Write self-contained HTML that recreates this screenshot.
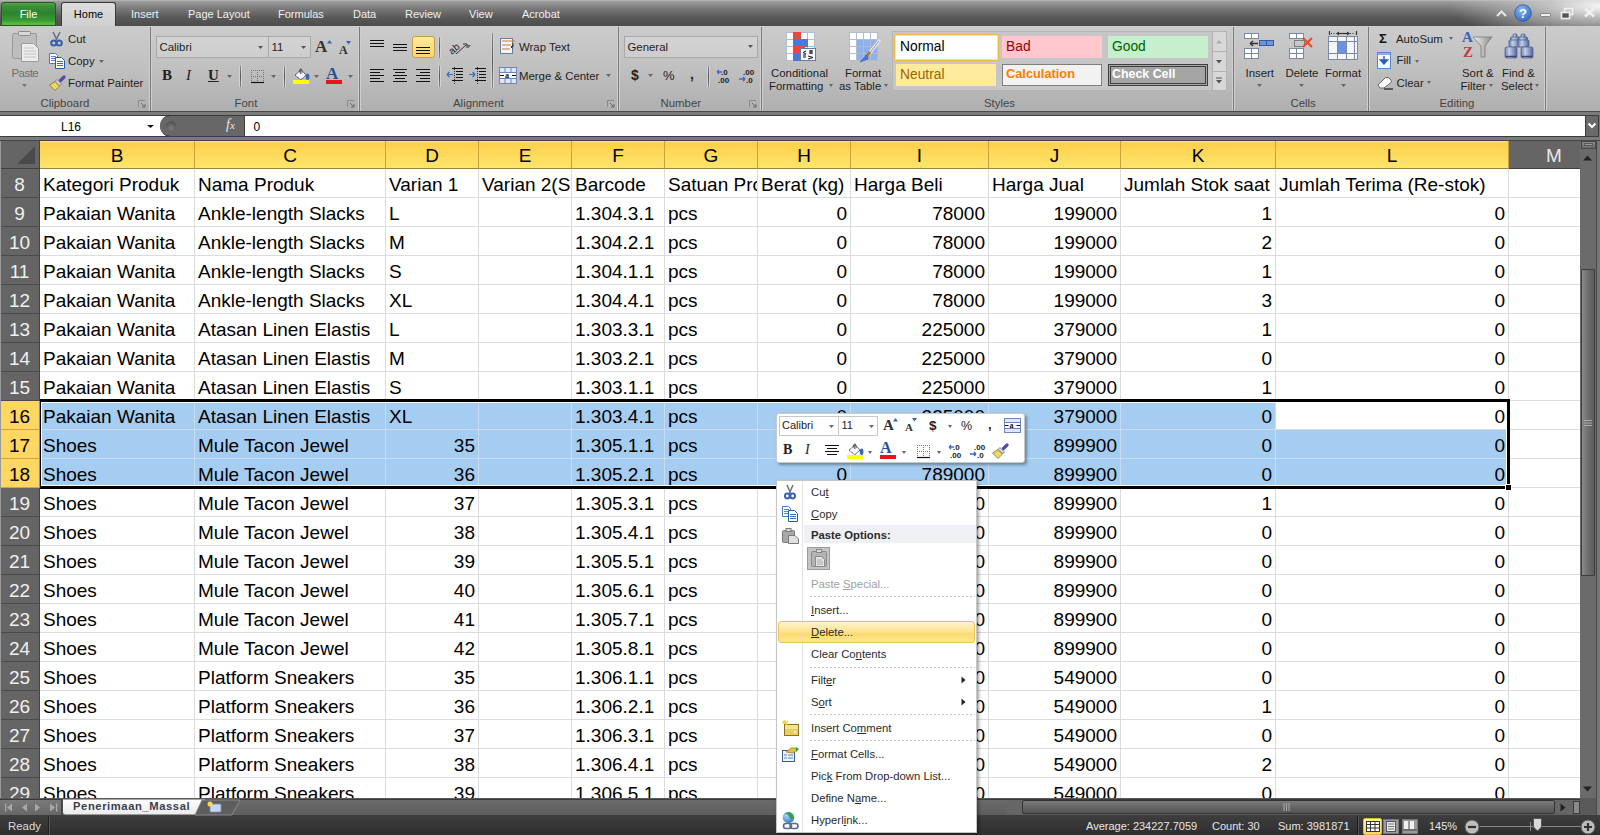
<!DOCTYPE html>
<html><head><meta charset="utf-8">
<style>
*{box-sizing:border-box;margin:0;padding:0}
html,body{width:1600px;height:835px;overflow:hidden;background:#fff;font-family:"Liberation Sans",sans-serif}
.a{position:absolute}
/* tab bar */
#tabbar{position:absolute;left:0;top:0;width:1600px;height:26px;background:linear-gradient(#bcbcbc 0px,#9c9c9c 1.5px,#7c7c7c 8px,#5a5a5a 17px,#4e4e4e 25px)}
#tabglow{position:absolute;left:1300px;top:0;width:300px;height:26px;background:radial-gradient(ellipse 150px 36px at 300px 6px,rgba(245,245,245,1),rgba(210,210,210,.75) 35%,rgba(120,120,120,0) 100%)}
.tab{position:absolute;top:8px;font-size:11px;color:#f0f0f0;white-space:nowrap}
#filetab{position:absolute;left:1px;top:2px;width:55px;height:24px;border-radius:3px 3px 0 0;background:linear-gradient(#5aa84a 0,#3e943a 12%,#2c822e 45%,#3a9c36 80%,#5cb83c 94%);border:1px solid #1e5e1e;color:#fff;font-size:11px;text-align:center;line-height:22px}
#hometab{position:absolute;left:61px;top:2px;width:55px;height:25px;border-radius:3px 3px 0 0;background:linear-gradient(#dcdcdc,#cfcfcf);border:1px solid #3a3a3a;border-bottom:none;color:#000;font-size:11px;text-align:center;line-height:23px}
/* ribbon */
#ribbon{position:absolute;left:0;top:26px;width:1600px;height:85px;background:linear-gradient(#cccccc,#c0c0c0 50%,#afafaf)}
.gsep{position:absolute;top:28px;width:2px;height:83px;border-left:1px solid #a8a8a8;border-right:1px solid #e4e4e4}
.glabel{position:absolute;top:96px;font-size:11.4px;color:#3c3c3c;text-align:center;white-space:nowrap}
.rt{position:absolute;font-size:11.4px;color:#1e1e1e;white-space:nowrap}
/* formula bar */
#fbar{position:absolute;left:0;top:111px;width:1600px;height:30px;background:#7b7b7b;border-top:1px solid #4a4a4a;border-bottom:1px solid #464646}
#namebox{position:absolute;left:0;top:115px;width:170px;height:22px;background:#fff;border-top:1px solid #3c3c3c;border-bottom:1px solid #3c3c3c}
#fxpill{position:absolute;left:160px;top:115px;width:84px;height:22px;background:#676767;border-radius:11px 0 0 11px;border-top:1px solid #3c3c3c;border-bottom:1px solid #3c3c3c}
#formula{position:absolute;left:244px;top:115px;width:1341px;height:22px;background:#fff;border-top:1px solid #3c3c3c;border-bottom:1px solid #3c3c3c;border-left:1px solid #3c3c3c}
/* grid */
#gridbg{position:absolute;left:0;top:141px;width:1600px;height:658px;background:#fff}
.c{position:absolute;height:29px;border-right:1px solid #dadcdd;border-bottom:1px solid #dadcdd;overflow:hidden;white-space:nowrap;font-size:19px;color:#000;line-height:28px}
.c span{position:absolute;top:2px}
.c.l span{left:3px}
.c.r span{right:3px}
.rh{position:absolute;left:0;width:40px;height:29px;background:#656565;border-bottom:1px solid #4a4a4a;border-right:1px solid #444;color:#f0f0f0;font-size:19px;text-align:center;line-height:28px;padding-top:2px}
.rh.sel{background:#fdd762;color:#000;border-bottom:1px solid #cfa646;border-right:1px solid #b98a2a}
.ch{position:absolute;top:141px;height:28px;background:#656565;border-right:1px solid #4a4a4a;border-bottom:1px solid #404040;color:#e8e8e8;font-size:19px;text-align:center;line-height:27px;padding-top:1px}
.ch.sel{background:linear-gradient(#fde08a 0,#fdd04c 2px,#fdd95a 45%,#fee56c 100%);color:#000;border-right:1px solid #c9a33a;border-bottom:1px solid #9f8040}
#corner{position:absolute;left:0;top:141px;width:40px;height:28px;background:#656565;border-right:1px solid #444;border-bottom:1px solid #404040}
/* selection */
#selbox{position:absolute;left:40px;top:399px;width:1470px;height:90px;border-style:solid;border-color:#000;border-width:3px 3px 3px 1px;box-shadow:inset 1px 1px 0 #fff,inset -1px -1px 0 #fff}
#fillh{position:absolute;left:1505px;top:484px;width:7px;height:7px;background:#fff;border:1px solid #fff}
#fillh div{width:5px;height:5px;background:#000}
#active{position:absolute}
/* scrollbars */
#vscroll{position:absolute;left:1580px;top:141px;width:20px;height:658px;background:#6b6b6b}
#tabrow{position:absolute;left:0;top:798px;width:1600px;height:17px;background:#5a5a5a}
#status{position:absolute;left:0;top:815px;width:1600px;height:20px;background:linear-gradient(#3e3e3e,#2e2e2e);color:#e0e0e0;font-size:11.4px}
/* context menu */
#menu{position:absolute;left:776px;top:480px;width:201px;height:353px;background:#fff;border:1px solid #c5c5c5;box-shadow:2px 2px 3px rgba(0,0,0,.35)}
.mi{position:absolute;left:34px;font-size:11.3px;color:#2a2a2a;white-space:nowrap}
#mini{position:absolute;left:776px;top:413px;width:249px;height:50px;background:#fff;border:1px solid #c9c9c9;border-radius:3px;box-shadow:2px 2px 3px rgba(0,0,0,.35)}
</style></head><body>
<div id="tabbar"></div>
<div id="tabglow"></div>
<div id="filetab">File</div>
<div id="hometab">Home</div>
<div class="tab" style="left:131px">Insert</div>
<div class="tab" style="left:188px">Page Layout</div>
<div class="tab" style="left:278px">Formulas</div>
<div class="tab" style="left:353px">Data</div>
<div class="tab" style="left:405px">Review</div>
<div class="tab" style="left:469px">View</div>
<div class="tab" style="left:522px">Acrobat</div>
<div id="ribbon"></div>
<div class="a" style="left:149px;top:27px;width:3px;height:84px;border-left:1px solid #cfcfcf;background:#7a7a7a;border-right:1px solid #cfcfcf"></div>
<div class="a" style="left:358px;top:27px;width:3px;height:84px;border-left:1px solid #cfcfcf;background:#7a7a7a;border-right:1px solid #cfcfcf"></div>
<div class="a" style="left:617px;top:27px;width:3px;height:84px;border-left:1px solid #cfcfcf;background:#7a7a7a;border-right:1px solid #cfcfcf"></div>
<div class="a" style="left:760px;top:27px;width:3px;height:84px;border-left:1px solid #cfcfcf;background:#7a7a7a;border-right:1px solid #cfcfcf"></div>
<div class="a" style="left:1232px;top:27px;width:3px;height:84px;border-left:1px solid #cfcfcf;background:#7a7a7a;border-right:1px solid #cfcfcf"></div>
<div class="a" style="left:1367px;top:27px;width:3px;height:84px;border-left:1px solid #cfcfcf;background:#7a7a7a;border-right:1px solid #cfcfcf"></div>
<div class="a" style="left:1544px;top:27px;width:3px;height:84px;border-left:1px solid #cfcfcf;background:#7a7a7a;border-right:1px solid #cfcfcf"></div>
<div class="rt" style="left:40.5px;top:97.1px;color:#444;font-size:11.4px;line-height:13.0px;">Clipboard</div>
<svg class="a" style="left:138px;top:100px" width="8" height="8" viewBox="0 0 8 8"><path d="M0.5 7V0.5H7" stroke="#8a8a8a" fill="none"/><path d="M3 3L7 7M7 4V7H4" stroke="#6a6a6a" fill="none"/></svg>
<div class="rt" style="left:234.5px;top:97.1px;color:#444;font-size:11.4px;line-height:13.0px;">Font</div>
<svg class="a" style="left:347px;top:100px" width="8" height="8" viewBox="0 0 8 8"><path d="M0.5 7V0.5H7" stroke="#8a8a8a" fill="none"/><path d="M3 3L7 7M7 4V7H4" stroke="#6a6a6a" fill="none"/></svg>
<div class="rt" style="left:453px;top:97.1px;color:#444;font-size:11.4px;line-height:13.0px;">Alignment</div>
<svg class="a" style="left:607px;top:100px" width="8" height="8" viewBox="0 0 8 8"><path d="M0.5 7V0.5H7" stroke="#8a8a8a" fill="none"/><path d="M3 3L7 7M7 4V7H4" stroke="#6a6a6a" fill="none"/></svg>
<div class="rt" style="left:660.5px;top:97.1px;color:#444;font-size:11.4px;line-height:13.0px;">Number</div>
<svg class="a" style="left:749px;top:100px" width="8" height="8" viewBox="0 0 8 8"><path d="M0.5 7V0.5H7" stroke="#8a8a8a" fill="none"/><path d="M3 3L7 7M7 4V7H4" stroke="#6a6a6a" fill="none"/></svg>
<div class="rt" style="left:984px;top:97.1px;color:#444;font-size:11.4px;line-height:13.0px;">Styles</div>
<div class="rt" style="left:1290.5px;top:97.1px;color:#444;font-size:11.4px;line-height:13.0px;">Cells</div>
<div class="rt" style="left:1439.5px;top:97.1px;color:#444;font-size:11.4px;line-height:13.0px;">Editing</div>
<svg class="a" style="left:11px;top:30px" width="30" height="32" viewBox="0 0 30 32"><rect x="1.5" y="3.5" width="24" height="25" rx="1.5" fill="#bdbdbd" stroke="#9a9a9a"/><rect x="7.5" y="1.5" width="12" height="4" rx="1" fill="#d8d8d8" stroke="#8a8a8a"/><path d="M10.5 13.5H22.5L27.5 18.5V31.5H10.5Z" fill="#ececec" stroke="#9c9c9c"/><path d="M13 18H23M13 21H25M13 24H25M13 27H25" stroke="#c4c4c4"/></svg>
<div class="rt" style="left:11.5px;top:66.6px;color:#6e6e6e;font-size:11.4px;line-height:13.0px;letter-spacing:-0.5px">Paste</div>
<svg class="a" style="left:22px;top:84px" width="5" height="3"><path d="M0 0H5L2.5 3Z" fill="#777"/></svg>
<svg class="a" style="left:50px;top:31px" width="13" height="16" viewBox="0 0 13 16"><path d="M3 1L7 9M10 1L6 9" stroke="#6f6f7f" stroke-width="1.6" fill="none"/><circle cx="3.8" cy="12" r="2.6" fill="none" stroke="#3a5db0" stroke-width="2"/><circle cx="9.2" cy="12" r="2.6" fill="none" stroke="#3a5db0" stroke-width="2"/></svg>
<div class="rt" style="left:68px;top:32.6px;color:#1e1e1e;font-size:11.4px;line-height:13.0px;">Cut</div>
<svg class="a" style="left:49px;top:53px" width="16" height="16" viewBox="0 0 16 16"><path d="M0.5 0.5H6.5L8.5 2.5V10.5H0.5Z" fill="#fff" stroke="#4a78c0"/><path d="M2 3.5H7M2 5.5H7M2 7.5H6" stroke="#5a8ad0"/><path d="M6.5 4.5H12.5L15.5 7.5V15.5H6.5Z" fill="#fff" stroke="#2d5aa6"/><path d="M8 8.5H14M8 10.5H14M8 12.5H14" stroke="#3d6ac0"/></svg>
<div class="rt" style="left:68px;top:55.1px;color:#1e1e1e;font-size:11.4px;line-height:13.0px;">Copy</div>
<svg class="a" style="left:99px;top:60px" width="5" height="3"><path d="M0 0H5L2.5 3Z" fill="#666"/></svg>
<svg class="a" style="left:49px;top:75px" width="17" height="16" viewBox="0 0 17 16"><path d="M11.5 5.5L15 2" stroke="#5a4aa8" stroke-width="3.2" stroke-linecap="round"/><path d="M8 4.5L12.5 9L10.5 11L6 6.5Z" fill="#d8d8e0" stroke="#6a6a7a" stroke-width=".8"/><path d="M6 6.5L10.5 11L6 15.5L0.5 10Z" fill="#e6cf5a" stroke="#8a7424" stroke-width=".8"/><path d="M3 10L7 14M5 8.5L9 12.5" stroke="#f6e9a0" stroke-width=".8"/></svg>
<div class="rt" style="left:68px;top:76.6px;color:#1e1e1e;font-size:11.4px;line-height:13.0px;">Format Painter</div>
<div class="a" style="left:156px;top:36px;width:113px;height:22px;border:1px solid #a8a8a8;background:linear-gradient(#d4d4d4,#cdcdcd)"></div>
<div class="a" style="left:268px;top:36px;width:43px;height:22px;border:1px solid #a8a8a8;background:linear-gradient(#d4d4d4,#cdcdcd)"></div>
<div class="rt" style="left:159.5px;top:40.6px;color:#1e1e1e;font-size:11.4px;line-height:13.0px;">Calibri</div>
<svg class="a" style="left:258px;top:46px" width="5" height="3"><path d="M0 0H5L2.5 3Z" fill="#555"/></svg>
<div class="rt" style="left:271.5px;top:40.6px;color:#1e1e1e;font-size:11.4px;line-height:13.0px;">11</div>
<svg class="a" style="left:301px;top:46px" width="5" height="3"><path d="M0 0H5L2.5 3Z" fill="#555"/></svg>
<div class="rt" style="left:315px;top:37px;font-family:'Liberation Serif';font-size:17px;font-weight:bold;color:#333">A</div>
<svg class="a" style="left:327px;top:40px" width="6" height="4" viewBox="0 0 6 4"><path d="M0 3.5H5L2.5 0Z" fill="#3a64b0"/></svg>
<div class="rt" style="left:339px;top:43px;font-family:'Liberation Serif';font-size:12px;font-weight:bold;color:#333">A</div>
<svg class="a" style="left:346px;top:41px" width="6" height="4" viewBox="0 0 6 4"><path d="M0 0H5L2.5 3.5Z" fill="#3a64b0"/></svg>
<div class="rt" style="left:162px;top:67px;font-family:'Liberation Serif';font-size:15px;font-weight:bold;color:#222">B</div>
<div class="rt" style="left:186px;top:67px;font-family:'Liberation Serif';font-size:15px;font-style:italic;color:#222">I</div>
<div class="rt" style="left:208px;top:67px;font-family:'Liberation Serif';font-size:15px;font-weight:bold;color:#222;text-decoration:underline">U</div>
<svg class="a" style="left:227px;top:75px" width="5" height="3"><path d="M0 0H5L2.5 3Z" fill="#666"/></svg>
<div class="a" style="left:239px;top:66px;width:3px;height:21px;border-left:1px solid #d2d2d2;background:linear-gradient(#8a8a8a,#555 50%,#8a8a8a);border-right:1px solid #d2d2d2"></div>
<svg class="a" style="left:250px;top:69px" width="15" height="15" viewBox="0 0 15 15"><path d="M1 1.5H14M1 7.5H14M1.5 1V14M7.5 1V14M13.5 1V14" stroke="#777" stroke-dasharray="1 1" fill="none"/><path d="M1 13.5H14" stroke="#111" stroke-width="1.2"/></svg>
<svg class="a" style="left:271px;top:75px" width="5" height="3"><path d="M0 0H5L2.5 3Z" fill="#666"/></svg>
<div class="a" style="left:283px;top:66px;width:3px;height:21px;border-left:1px solid #d2d2d2;background:linear-gradient(#8a8a8a,#555 50%,#8a8a8a);border-right:1px solid #d2d2d2"></div>
<svg class="a" style="left:292px;top:67px" width="19" height="18" viewBox="0 0 19 18"><path d="M3 8.3L8.8 2.7L14.3 8L8.8 12.8Z" fill="#f4f6fb" stroke="#2a3040" stroke-width="1" stroke-dasharray="1.2 .6"/><path d="M7 5.5Q8.8 -1.5 10.6 5.5" stroke="#555" stroke-width="1.1" fill="none"/><path d="M8.8 3V7" stroke="#555" stroke-width="1.2"/><ellipse cx="15.6" cy="9.8" rx="1.8" ry="3.2" fill="#3a64b8"/><rect x="1" y="13" width="16" height="4" fill="#ffff00"/></svg>
<svg class="a" style="left:314px;top:75px" width="5" height="3"><path d="M0 0H5L2.5 3Z" fill="#666"/></svg>
<div class="rt" style="left:326px;top:64px;font-family:'Liberation Serif';font-size:17px;font-weight:bold;color:#2a4f9a">A</div>
<div class="a" style="left:326px;top:80px;width:16px;height:4px;background:#e8141c"></div>
<svg class="a" style="left:348px;top:75px" width="5" height="3"><path d="M0 0H5L2.5 3Z" fill="#666"/></svg>
<svg class="a" style="left:370px;top:40px" width="16" height="10" viewBox="0 0 16 10"><path d="M0 0.5H14" stroke="#111" stroke-width="1"/><path d="M0 3.5H14" stroke="#111" stroke-width="1"/><path d="M0 6.5H14" stroke="#111" stroke-width="1"/></svg>
<svg class="a" style="left:393px;top:44px" width="16" height="10" viewBox="0 0 16 10"><path d="M0 0.5H14" stroke="#111" stroke-width="1"/><path d="M0 3.5H14" stroke="#111" stroke-width="1"/><path d="M0 6.5H14" stroke="#111" stroke-width="1"/></svg>
<div class="a" style="left:412px;top:36px;width:23px;height:22px;border:1px solid #c4a24a;border-radius:3px;background:linear-gradient(#fde9a0,#fbd86a)"></div>
<svg class="a" style="left:416px;top:47px" width="16" height="10" viewBox="0 0 16 10"><path d="M0 0.5H14" stroke="#111" stroke-width="1"/><path d="M0 3.5H14" stroke="#111" stroke-width="1"/><path d="M0 6.5H14" stroke="#111" stroke-width="1"/></svg>
<div class="a" style="left:438px;top:37px;width:3px;height:21px;border-left:1px solid #d2d2d2;background:linear-gradient(#8a8a8a,#555 50%,#8a8a8a);border-right:1px solid #d2d2d2"></div>
<svg class="a" style="left:447px;top:39px" width="26" height="17" viewBox="0 0 26 17"><text x="1" y="13" font-family="Liberation Sans" font-size="10" transform="rotate(-40 7 9)" fill="#222">ab</text><path d="M9 15L19 6M16 5H20V9" stroke="#333" fill="none"/></svg>
<svg class="a" style="left:466px;top:45px" width="5" height="3"><path d="M0 0H5L2.5 3Z" fill="#666"/></svg>
<svg class="a" style="left:370px;top:69px" width="16" height="16" viewBox="0 0 16 16"><path d="M0 0.5H14" stroke="#111" stroke-width="1"/><path d="M0 3.5H10" stroke="#111" stroke-width="1"/><path d="M0 6.5H14" stroke="#111" stroke-width="1"/><path d="M0 9.5H10" stroke="#111" stroke-width="1"/><path d="M0 12.5H14" stroke="#111" stroke-width="1"/></svg>
<svg class="a" style="left:393px;top:69px" width="16" height="16" viewBox="0 0 16 16"><path d="M0 0.5H14" stroke="#111" stroke-width="1"/><path d="M2 3.5H12" stroke="#111" stroke-width="1"/><path d="M0 6.5H14" stroke="#111" stroke-width="1"/><path d="M2 9.5H12" stroke="#111" stroke-width="1"/><path d="M0 12.5H14" stroke="#111" stroke-width="1"/></svg>
<svg class="a" style="left:416px;top:69px" width="16" height="16" viewBox="0 0 16 16"><path d="M0 0.5H14" stroke="#111" stroke-width="1"/><path d="M4 3.5H14" stroke="#111" stroke-width="1"/><path d="M0 6.5H14" stroke="#111" stroke-width="1"/><path d="M4 9.5H14" stroke="#111" stroke-width="1"/><path d="M0 12.5H14" stroke="#111" stroke-width="1"/></svg>
<div class="a" style="left:438px;top:66px;width:3px;height:21px;border-left:1px solid #d2d2d2;background:linear-gradient(#8a8a8a,#555 50%,#8a8a8a);border-right:1px solid #d2d2d2"></div>
<svg class="a" style="left:446px;top:67px" width="18" height="17" viewBox="0 0 18 17"><path d="M6 1.5H17M10 4.5H17M10 7.5H17M10 10.5H17M6 13.5H17" stroke="#111" stroke-width="1"/><path d="M1 7.5H7M1 7.5L3.5 5M1 7.5L3.5 10" stroke="#3a6ad0" stroke-width="1.2" fill="none"/><path d="M8.5 0V17" stroke="#333" stroke-dasharray="1 1"/></svg>
<svg class="a" style="left:469px;top:67px" width="18" height="17" viewBox="0 0 18 17"><path d="M6 1.5H17M10 4.5H17M10 7.5H17M10 10.5H17M6 13.5H17" stroke="#111" stroke-width="1"/><path d="M0 7.5H6M6 7.5L3.5 5M6 7.5L3.5 10" stroke="#3a6ad0" stroke-width="1.2" fill="none"/><path d="M8.5 0V17" stroke="#333" stroke-dasharray="1 1"/></svg>
<div class="a" style="left:491px;top:33px;width:3px;height:55px;border-left:1px solid #d2d2d2;background:linear-gradient(#8a8a8a,#555 50%,#8a8a8a);border-right:1px solid #d2d2d2"></div>
<svg class="a" style="left:499px;top:37px" width="18" height="18" viewBox="0 0 18 18"><rect x="1.5" y="1.5" width="12" height="15" fill="#f4f4f4" stroke="#6a7fa0"/><path d="M3 4H16M3 8H12M3 12H11" stroke="#c87a3a" stroke-width="1.2"/><path d="M14 6V10L12 10M12 10L13.5 8.5M12 10L13.5 11.5" stroke="#333" fill="none"/></svg>
<div class="rt" style="left:519px;top:40.6px;color:#1e1e1e;font-size:11.4px;line-height:13.0px;">Wrap Text</div>
<svg class="a" style="left:499px;top:67px" width="18" height="17" viewBox="0 0 18 17"><rect x="0.5" y="0.5" width="17" height="16" fill="#dfe8f6" stroke="#6a86b8"/><path d="M0 5.5H18M0 11.5H18M6 0V5M12 0V5M6 12V17M12 12V17" stroke="#6a86b8"/><rect x="1" y="6" width="16" height="5" fill="#fff"/><text x="6" y="11" font-family="Liberation Serif" font-size="8" font-weight="bold" fill="#111">a</text><path d="M1 8.5H5M13 8.5H17" stroke="#111"/></svg>
<div class="rt" style="left:519px;top:69.6px;color:#1e1e1e;font-size:11.4px;line-height:13.0px;">Merge &amp; Center</div>
<svg class="a" style="left:606px;top:74px" width="5" height="3"><path d="M0 0H5L2.5 3Z" fill="#666"/></svg>
<div class="a" style="left:624px;top:36px;width:134px;height:22px;border:1px solid #a8a8a8;background:linear-gradient(#d4d4d4,#cdcdcd)"></div>
<div class="rt" style="left:627.5px;top:41.1px;color:#1e1e1e;font-size:11.4px;line-height:13.0px;">General</div>
<svg class="a" style="left:748px;top:45px" width="5" height="3"><path d="M0 0H5L2.5 3Z" fill="#555"/></svg>
<div class="rt" style="left:631px;top:67px;font-size:14px;font-weight:bold;color:#222">$</div>
<svg class="a" style="left:648px;top:74px" width="5" height="3"><path d="M0 0H5L2.5 3Z" fill="#666"/></svg>
<div class="rt" style="left:663px;top:68px;font-size:13px;color:#222">%</div>
<div class="rt" style="left:690px;top:66px;font-size:14px;font-weight:bold;color:#222">,</div>
<div class="a" style="left:707px;top:66px;width:3px;height:21px;border-left:1px solid #d2d2d2;background:linear-gradient(#8a8a8a,#555 50%,#8a8a8a);border-right:1px solid #d2d2d2"></div>
<svg class="a" style="left:716px;top:68px" width="18" height="16" viewBox="0 0 18 16"><text x="5" y="7" font-family="Liberation Sans" font-size="8" font-weight="bold" fill="#222">.0</text><text x="2" y="15" font-family="Liberation Sans" font-size="8" font-weight="bold" fill="#222">.00</text><path d="M1 4H6M1 4L3 2M1 4L3 6" stroke="#3a6ad0" stroke-width="1.3" fill="none"/></svg>
<svg class="a" style="left:738px;top:68px" width="18" height="16" viewBox="0 0 18 16"><text x="5" y="7" font-family="Liberation Sans" font-size="8" font-weight="bold" fill="#222">.00</text><text x="8" y="15" font-family="Liberation Sans" font-size="8" font-weight="bold" fill="#222">.0</text><path d="M1 11H7M7 11L5 9M7 11L5 13" stroke="#3a6ad0" stroke-width="1.3" fill="none"/></svg>
<svg class="a" style="left:786px;top:32px" width="32" height="30" viewBox="0 0 32 30"><rect x="0.5" y="0.5" width="7" height="7" fill="#ffffff" stroke="#b4bccc" stroke-width="1"/><rect x="7.5" y="0.5" width="7" height="7" fill="#ffffff" stroke="#b4bccc" stroke-width="1"/><rect x="14.5" y="0.5" width="7" height="7" fill="#ffffff" stroke="#b4bccc" stroke-width="1"/><rect x="21.5" y="0.5" width="7" height="7" fill="#ffffff" stroke="#b4bccc" stroke-width="1"/><rect x="0.5" y="7.5" width="7" height="7" fill="#ffffff" stroke="#b4bccc" stroke-width="1"/><rect x="7.5" y="7.5" width="7" height="7" fill="#ffffff" stroke="#b4bccc" stroke-width="1"/><rect x="14.5" y="7.5" width="7" height="7" fill="#ffffff" stroke="#b4bccc" stroke-width="1"/><rect x="21.5" y="7.5" width="7" height="7" fill="#ffffff" stroke="#b4bccc" stroke-width="1"/><rect x="0.5" y="14.5" width="7" height="7" fill="#ffffff" stroke="#b4bccc" stroke-width="1"/><rect x="7.5" y="14.5" width="7" height="7" fill="#ffffff" stroke="#b4bccc" stroke-width="1"/><rect x="14.5" y="14.5" width="7" height="7" fill="#ffffff" stroke="#b4bccc" stroke-width="1"/><rect x="21.5" y="14.5" width="7" height="7" fill="#ffffff" stroke="#b4bccc" stroke-width="1"/><rect x="0.5" y="21.5" width="7" height="7" fill="#ffffff" stroke="#b4bccc" stroke-width="1"/><rect x="7.5" y="21.5" width="7" height="7" fill="#ffffff" stroke="#b4bccc" stroke-width="1"/><rect x="14.5" y="21.5" width="7" height="7" fill="#ffffff" stroke="#b4bccc" stroke-width="1"/><rect x="21.5" y="21.5" width="7" height="7" fill="#ffffff" stroke="#b4bccc" stroke-width="1"/><rect x="7" y="0" width="8" height="8" fill="#e84a3a"/><rect x="7" y="7" width="15" height="8" fill="#4a7ad8"/><rect x="7" y="14" width="12" height="8" fill="#e84a3a"/><rect x="7" y="21" width="8" height="8" fill="#4a7ad8"/><rect x="14.5" y="16.5" width="15" height="12" fill="#f4f8ff" stroke="#6a7a9a"/><path d="M20 19L17 20.5L20 22M17 23H20M17 25H20M23 19H27M23 21H27M25 18V22M22 24L27 25.5L22 27" stroke="#111" stroke-width="1" fill="none"/></svg>
<svg class="a" style="left:849px;top:32px" width="32" height="31" viewBox="0 0 32 31"><rect x="0.5" y="0.5" width="7" height="7" fill="#ffffff" stroke="#b4bccc" stroke-width="1"/><rect x="7.5" y="0.5" width="7" height="7" fill="#ffffff" stroke="#b4bccc" stroke-width="1"/><rect x="14.5" y="0.5" width="7" height="7" fill="#ffffff" stroke="#b4bccc" stroke-width="1"/><rect x="21.5" y="0.5" width="7" height="7" fill="#ffffff" stroke="#b4bccc" stroke-width="1"/><rect x="0.5" y="7.5" width="7" height="7" fill="#ffffff" stroke="#b4bccc" stroke-width="1"/><rect x="7.5" y="7.5" width="7" height="7" fill="#8eb0ec" stroke="#b4bccc" stroke-width="1"/><rect x="14.5" y="7.5" width="7" height="7" fill="#8eb0ec" stroke="#b4bccc" stroke-width="1"/><rect x="21.5" y="7.5" width="7" height="7" fill="#8eb0ec" stroke="#b4bccc" stroke-width="1"/><rect x="0.5" y="14.5" width="7" height="7" fill="#ffffff" stroke="#b4bccc" stroke-width="1"/><rect x="7.5" y="14.5" width="7" height="7" fill="#8eb0ec" stroke="#b4bccc" stroke-width="1"/><rect x="14.5" y="14.5" width="7" height="7" fill="#8eb0ec" stroke="#b4bccc" stroke-width="1"/><rect x="21.5" y="14.5" width="7" height="7" fill="#8eb0ec" stroke="#b4bccc" stroke-width="1"/><rect x="0.5" y="21.5" width="7" height="7" fill="#ffffff" stroke="#b4bccc" stroke-width="1"/><rect x="7.5" y="21.5" width="7" height="7" fill="#8eb0ec" stroke="#b4bccc" stroke-width="1"/><rect x="14.5" y="21.5" width="7" height="7" fill="#8eb0ec" stroke="#b4bccc" stroke-width="1"/><rect x="21.5" y="21.5" width="7" height="7" fill="#8eb0ec" stroke="#b4bccc" stroke-width="1"/><path d="M30 9L20 22" stroke="#e8e8e8" stroke-width="3.2" stroke-linecap="round"/><path d="M30 9L20 22" stroke="#9a9a9a" stroke-width="1" /><path d="M21 20L17 25" stroke="#a08040" stroke-width="3"/><path d="M17.5 23L11 30L19 27Z" fill="#4a78d0" stroke="#3a5aa0" stroke-width=".6"/></svg>
<div class="rt" style="left:771px;top:66.6px;color:#1e1e1e;font-size:11.4px;line-height:13.0px;">Conditional</div>
<div class="rt" style="left:769px;top:79.6px;color:#1e1e1e;font-size:11.4px;line-height:13.0px;">Formatting</div>
<svg class="a" style="left:829px;top:84px" width="4" height="3"><path d="M0 0H4L2.0 3Z" fill="#666"/></svg>
<div class="rt" style="left:845px;top:66.6px;color:#1e1e1e;font-size:11.4px;line-height:13.0px;">Format</div>
<div class="rt" style="left:839px;top:79.6px;color:#1e1e1e;font-size:11.4px;line-height:13.0px;">as Table</div>
<svg class="a" style="left:884px;top:84px" width="4" height="3"><path d="M0 0H4L2.0 3Z" fill="#666"/></svg>
<div class="a" style="left:892px;top:31px;width:335px;height:60px;border:1px solid #b4b4b4;background:#c6c6c6"></div>
<div class="a" style="left:894px;top:34px;width:105px;height:27px;border:1px solid #f0b840;border-radius:2px;background:#fff;box-shadow:inset 0 0 0 1px #ffe6a0"></div>
<div class="rt" style="left:900px;top:39.1px;color:#000;font-size:13.8px;line-height:15.7px;">Normal</div>
<div class="a" style="left:1002px;top:36px;width:100px;height:22px;background:#ffc7ce"></div>
<div class="rt" style="left:1006px;top:39.1px;color:#9c0006;font-size:13.8px;line-height:15.7px;">Bad</div>
<div class="a" style="left:1108px;top:36px;width:100px;height:22px;background:#c6efce"></div>
<div class="rt" style="left:1112px;top:39.1px;color:#006100;font-size:13.8px;line-height:15.7px;">Good</div>
<div class="a" style="left:896px;top:64px;width:100px;height:22px;background:#ffeb9c"></div>
<div class="rt" style="left:900px;top:66.6px;color:#9c6500;font-size:13.8px;line-height:15.7px;">Neutral</div>
<div class="a" style="left:1002px;top:64px;width:100px;height:22px;background:#f2f2f2;border:1px solid #7f7f7f"></div>
<div class="rt" style="left:1006px;top:66.8px;color:#fa7d00;font-size:12.8px;line-height:14.6px;font-weight:bold">Calculation</div>
<div class="a" style="left:1108px;top:64px;width:100px;height:22px;background:#a5a5a5;border:3px double #3f3f3f"></div>
<div class="rt" style="left:1112px;top:66.9px;color:#fff;font-size:12.4px;line-height:14.1px;font-weight:bold">Check Cell</div>
<div class="a" style="left:1212px;top:32px;width:14px;height:58px;background:#d8d8d8;border-left:1px solid #b0b0b0"></div>
<div class="a" style="left:1212px;top:51px;width:14px;height:1px;background:#b0b0b0"></div>
<div class="a" style="left:1212px;top:71px;width:14px;height:1px;background:#b0b0b0"></div>
<svg class="a" style="left:1216px;top:40px" width="7" height="4" viewBox="0 0 7 4"><path d="M0 3.5H6L3 0Z" fill="#aaa"/></svg>
<svg class="a" style="left:1216px;top:60px" width="7" height="4" viewBox="0 0 7 4"><path d="M0 0H6L3 3.5Z" fill="#555"/></svg>
<svg class="a" style="left:1216px;top:77px" width="7" height="8" viewBox="0 0 7 8"><path d="M0 1H6" stroke="#555"/><path d="M0 3H6L3 6.5Z" fill="#555"/></svg>
<svg class="a" style="left:1244px;top:33px" width="32" height="27" viewBox="0 0 32 27"><g transform="translate(0,0)"><rect x="0.5" y="0.5" width="7" height="5" fill="#fff" stroke="#7a88a4"/><rect x="7.5" y="0.5" width="7" height="5" fill="#fff" stroke="#7a88a4"/></g><g transform="translate(15,7)"><rect x="0.5" y="0.5" width="7" height="5" fill="#6a94e0" stroke="#3a5aa0"/><rect x="7.5" y="0.5" width="7" height="5" fill="#6a94e0" stroke="#3a5aa0"/></g><path d="M6 10.5H14M6 10.5L9 8M6 10.5L9 13" stroke="#333" stroke-width="1.3" fill="none"/><g transform="translate(0,15)"><rect x="0.5" y="0.5" width="7" height="5" fill="#fff" stroke="#7a88a4"/><rect x="0.5" y="5.5" width="7" height="5" fill="#fff" stroke="#7a88a4"/><rect x="7.5" y="0.5" width="7" height="5" fill="#fff" stroke="#7a88a4"/><rect x="7.5" y="5.5" width="7" height="5" fill="#fff" stroke="#7a88a4"/></g></svg>
<div class="rt" style="left:1245.5px;top:66.6px;color:#1e1e1e;font-size:11.4px;line-height:13.0px;">Insert</div>
<svg class="a" style="left:1257px;top:84px" width="5" height="3"><path d="M0 0H5L2.5 3Z" fill="#666"/></svg>
<svg class="a" style="left:1289px;top:33px" width="26" height="27" viewBox="0 0 26 27"><g><rect x="0.5" y="0.5" width="7" height="5" fill="#fff" stroke="#7a88a4"/><rect x="7.5" y="0.5" width="7" height="5" fill="#fff" stroke="#7a88a4"/></g><rect x="5.5" y="7.5" width="10" height="6" fill="none" stroke="#333" stroke-dasharray="1 1"/><g transform="translate(0,15)"><rect x="0.5" y="0.5" width="7" height="5" fill="#fff" stroke="#7a88a4"/><rect x="0.5" y="5.5" width="7" height="5" fill="#fff" stroke="#7a88a4"/><rect x="7.5" y="0.5" width="7" height="5" fill="#fff" stroke="#7a88a4"/><rect x="7.5" y="5.5" width="7" height="5" fill="#fff" stroke="#7a88a4"/></g><path d="M14 5L23 14M23 5L14 14" stroke="#e84a2a" stroke-width="2.2"/></svg>
<div class="rt" style="left:1285.5px;top:66.6px;color:#1e1e1e;font-size:11.4px;line-height:13.0px;">Delete</div>
<svg class="a" style="left:1299px;top:84px" width="5" height="3"><path d="M0 0H5L2.5 3Z" fill="#666"/></svg>
<svg class="a" style="left:1328px;top:31px" width="31" height="30" viewBox="0 0 31 30"><path d="M1.5 0V4M28.5 0V4" stroke="#333" stroke-width="1.2"/><path d="M3 2.5H8M22 2.5H27" stroke="#333" stroke-dasharray="1 1.5"/><path d="M9 2.5H21" stroke="#333" stroke-width="1.2"/><path d="M8 2.5L11 0.5V4.5ZM22 2.5L19 0.5V4.5Z" fill="#333"/><rect x="0.5" y="5.5" width="29" height="23" fill="#f4f6fb" stroke="#7a8aaa"/><path d="M0 10.5H30M0 22.5H30M9.5 5V29M18.5 5V29M26.5 5V29" stroke="#7a8aaa"/><rect x="10" y="11" width="8" height="11" fill="#6a94e0"/></svg>
<div class="rt" style="left:1325px;top:66.6px;color:#1e1e1e;font-size:11.4px;line-height:13.0px;">Format</div>
<svg class="a" style="left:1341px;top:84px" width="5" height="3"><path d="M0 0H5L2.5 3Z" fill="#666"/></svg>
<div class="rt" style="left:1379px;top:31px;font-size:13px;font-weight:bold;color:#111">&#931;</div>
<div class="rt" style="left:1396px;top:32.6px;color:#1e1e1e;font-size:11.4px;line-height:13.0px;">AutoSum</div>
<svg class="a" style="left:1449px;top:37px" width="4" height="3"><path d="M0 0H4L2.0 3Z" fill="#666"/></svg>
<svg class="a" style="left:1377px;top:52px" width="15" height="17" viewBox="0 0 15 17"><rect x="0.5" y="0.5" width="13" height="16" fill="#f4f8ff" stroke="#5a86c8"/><rect x="1" y="1" width="12" height="2" fill="#8ab0e8"/><path d="M7 4V11M3.5 8L7 12L10.5 8Z" fill="#3a74d8" stroke="#2a5ab8" stroke-width="1.4"/></svg>
<div class="rt" style="left:1396.5px;top:53.6px;color:#1e1e1e;font-size:11.4px;line-height:13.0px;">Fill</div>
<svg class="a" style="left:1415px;top:60px" width="4" height="3"><path d="M0 0H4L2.0 3Z" fill="#666"/></svg>
<svg class="a" style="left:1377px;top:76px" width="17" height="14" viewBox="0 0 17 14"><path d="M1 9L8 2Q10 0.5 12 2L14 4Q15 6 13.5 7L7 12H3Z" fill="#fafafa" stroke="#6a6a6a"/><path d="M7 13H16" stroke="#222" stroke-width="1.3"/></svg>
<div class="rt" style="left:1396.5px;top:76.6px;color:#1e1e1e;font-size:11.4px;line-height:13.0px;">Clear</div>
<svg class="a" style="left:1427px;top:81px" width="4" height="3"><path d="M0 0H4L2.0 3Z" fill="#666"/></svg>
<div class="rt" style="left:1462px;top:29px;font-family:'Liberation Serif';font-size:15px;font-weight:bold;color:#3a64b8">A</div>
<div class="rt" style="left:1463px;top:44px;font-family:'Liberation Serif';font-size:15px;font-weight:bold;color:#c03a3a">Z</div>
<svg class="a" style="left:1472px;top:36px" width="21" height="22" viewBox="0 0 21 22"><defs><linearGradient id="fg1" x1="0" x2="1"><stop offset="0" stop-color="#f4f4f4"/><stop offset="1" stop-color="#8a8a8a"/></linearGradient></defs><path d="M1 1H20L13 10V21H9V10Z" fill="url(#fg1)" stroke="#7a7a7a" stroke-width=".8"/></svg>
<div class="rt" style="left:1462px;top:67.1px;color:#1e1e1e;font-size:11.4px;line-height:13.0px;">Sort &amp;</div>
<div class="rt" style="left:1460.5px;top:79.6px;color:#1e1e1e;font-size:11.4px;line-height:13.0px;">Filter</div>
<svg class="a" style="left:1489px;top:84px" width="4" height="3"><path d="M0 0H4L2.0 3Z" fill="#666"/></svg>
<svg class="a" style="left:1504px;top:33px" width="30" height="26" viewBox="0 0 30 26"><defs><linearGradient id="bg1" x1="0" x2="1" y1="0" y2="0"><stop offset="0" stop-color="#6a7eb0"/><stop offset=".35" stop-color="#c4d0ea"/><stop offset="1" stop-color="#50669a"/></linearGradient></defs><g fill="url(#bg1)" stroke="#4a5a88" stroke-width=".7"><rect x="9" y="1" width="4" height="3.5" rx="1"/><rect x="17" y="1" width="4" height="3.5" rx="1"/><rect x="6.5" y="4" width="9" height="3.5" rx="1"/><rect x="14.5" y="4" width="9" height="3.5" rx="1"/><rect x="5" y="7" width="11" height="7" rx="1"/><rect x="14" y="7" width="11" height="7" rx="1"/><rect x="1" y="14" width="12" height="11" rx="1.5"/><rect x="17" y="14" width="12" height="11" rx="1.5"/></g><path d="M1.5 23.5H12.5M17.5 23.5H28.5" stroke="#34487a" stroke-width="1.5"/></svg>
<div class="rt" style="left:1502px;top:67.1px;color:#1e1e1e;font-size:11.4px;line-height:13.0px;">Find &amp;</div>
<div class="rt" style="left:1501px;top:79.6px;color:#1e1e1e;font-size:11.4px;line-height:13.0px;">Select</div>
<svg class="a" style="left:1535px;top:84px" width="4" height="3"><path d="M0 0H4L2.0 3Z" fill="#666"/></svg>
<div id="fbar"></div>
<div id="namebox"></div>
<div id="fxpill"></div>
<div id="formula"></div>
<div class="a" style="left:61px;top:120px;font-size:12px">L16</div>
<div class="a" style="left:253.5px;top:120px;font-size:12px">0</div>
<div id="gridbg"></div>
<div class="c l" style="left:40px;top:169px;width:155px;"><span>Kategori Produk</span></div>
<div class="c l" style="left:195px;top:169px;width:191px;"><span>Nama Produk</span></div>
<div class="c l" style="left:386px;top:169px;width:93px;"><span>Varian 1</span></div>
<div class="c l" style="left:479px;top:169px;width:93px;"><span>Varian 2(Size)</span></div>
<div class="c l" style="left:572px;top:169px;width:93px;"><span>Barcode</span></div>
<div class="c l" style="left:665px;top:169px;width:93px;"><span>Satuan Produk</span></div>
<div class="c l" style="left:758px;top:169px;width:93px;"><span>Berat (kg) (opsional)</span></div>
<div class="c l" style="left:851px;top:169px;width:138px;"><span>Harga Beli</span></div>
<div class="c l" style="left:989px;top:169px;width:132px;"><span>Harga Jual</span></div>
<div class="c l" style="left:1121px;top:169px;width:155px;"><span>Jumlah Stok saat ini</span></div>
<div class="c l" style="left:1276px;top:169px;width:233px;"><span>Jumlah Terima (Re-stok)</span></div>
<div class="c l" style="left:1509px;top:169px;width:72px;"><span></span></div>
<div class="c l" style="left:40px;top:198px;width:155px;"><span>Pakaian Wanita</span></div>
<div class="c l" style="left:195px;top:198px;width:191px;"><span>Ankle-length Slacks</span></div>
<div class="c l" style="left:386px;top:198px;width:93px;"><span>L</span></div>
<div class="c l" style="left:479px;top:198px;width:93px;"><span></span></div>
<div class="c l" style="left:572px;top:198px;width:93px;"><span>1.304.3.1</span></div>
<div class="c l" style="left:665px;top:198px;width:93px;"><span>pcs</span></div>
<div class="c r" style="left:758px;top:198px;width:93px;"><span>0</span></div>
<div class="c r" style="left:851px;top:198px;width:138px;"><span>78000</span></div>
<div class="c r" style="left:989px;top:198px;width:132px;"><span>199000</span></div>
<div class="c r" style="left:1121px;top:198px;width:155px;"><span>1</span></div>
<div class="c r" style="left:1276px;top:198px;width:233px;"><span>0</span></div>
<div class="c l" style="left:1509px;top:198px;width:72px;"><span></span></div>
<div class="c l" style="left:40px;top:227px;width:155px;"><span>Pakaian Wanita</span></div>
<div class="c l" style="left:195px;top:227px;width:191px;"><span>Ankle-length Slacks</span></div>
<div class="c l" style="left:386px;top:227px;width:93px;"><span>M</span></div>
<div class="c l" style="left:479px;top:227px;width:93px;"><span></span></div>
<div class="c l" style="left:572px;top:227px;width:93px;"><span>1.304.2.1</span></div>
<div class="c l" style="left:665px;top:227px;width:93px;"><span>pcs</span></div>
<div class="c r" style="left:758px;top:227px;width:93px;"><span>0</span></div>
<div class="c r" style="left:851px;top:227px;width:138px;"><span>78000</span></div>
<div class="c r" style="left:989px;top:227px;width:132px;"><span>199000</span></div>
<div class="c r" style="left:1121px;top:227px;width:155px;"><span>2</span></div>
<div class="c r" style="left:1276px;top:227px;width:233px;"><span>0</span></div>
<div class="c l" style="left:1509px;top:227px;width:72px;"><span></span></div>
<div class="c l" style="left:40px;top:256px;width:155px;"><span>Pakaian Wanita</span></div>
<div class="c l" style="left:195px;top:256px;width:191px;"><span>Ankle-length Slacks</span></div>
<div class="c l" style="left:386px;top:256px;width:93px;"><span>S</span></div>
<div class="c l" style="left:479px;top:256px;width:93px;"><span></span></div>
<div class="c l" style="left:572px;top:256px;width:93px;"><span>1.304.1.1</span></div>
<div class="c l" style="left:665px;top:256px;width:93px;"><span>pcs</span></div>
<div class="c r" style="left:758px;top:256px;width:93px;"><span>0</span></div>
<div class="c r" style="left:851px;top:256px;width:138px;"><span>78000</span></div>
<div class="c r" style="left:989px;top:256px;width:132px;"><span>199000</span></div>
<div class="c r" style="left:1121px;top:256px;width:155px;"><span>1</span></div>
<div class="c r" style="left:1276px;top:256px;width:233px;"><span>0</span></div>
<div class="c l" style="left:1509px;top:256px;width:72px;"><span></span></div>
<div class="c l" style="left:40px;top:285px;width:155px;"><span>Pakaian Wanita</span></div>
<div class="c l" style="left:195px;top:285px;width:191px;"><span>Ankle-length Slacks</span></div>
<div class="c l" style="left:386px;top:285px;width:93px;"><span>XL</span></div>
<div class="c l" style="left:479px;top:285px;width:93px;"><span></span></div>
<div class="c l" style="left:572px;top:285px;width:93px;"><span>1.304.4.1</span></div>
<div class="c l" style="left:665px;top:285px;width:93px;"><span>pcs</span></div>
<div class="c r" style="left:758px;top:285px;width:93px;"><span>0</span></div>
<div class="c r" style="left:851px;top:285px;width:138px;"><span>78000</span></div>
<div class="c r" style="left:989px;top:285px;width:132px;"><span>199000</span></div>
<div class="c r" style="left:1121px;top:285px;width:155px;"><span>3</span></div>
<div class="c r" style="left:1276px;top:285px;width:233px;"><span>0</span></div>
<div class="c l" style="left:1509px;top:285px;width:72px;"><span></span></div>
<div class="c l" style="left:40px;top:314px;width:155px;"><span>Pakaian Wanita</span></div>
<div class="c l" style="left:195px;top:314px;width:191px;"><span>Atasan Linen Elastis</span></div>
<div class="c l" style="left:386px;top:314px;width:93px;"><span>L</span></div>
<div class="c l" style="left:479px;top:314px;width:93px;"><span></span></div>
<div class="c l" style="left:572px;top:314px;width:93px;"><span>1.303.3.1</span></div>
<div class="c l" style="left:665px;top:314px;width:93px;"><span>pcs</span></div>
<div class="c r" style="left:758px;top:314px;width:93px;"><span>0</span></div>
<div class="c r" style="left:851px;top:314px;width:138px;"><span>225000</span></div>
<div class="c r" style="left:989px;top:314px;width:132px;"><span>379000</span></div>
<div class="c r" style="left:1121px;top:314px;width:155px;"><span>1</span></div>
<div class="c r" style="left:1276px;top:314px;width:233px;"><span>0</span></div>
<div class="c l" style="left:1509px;top:314px;width:72px;"><span></span></div>
<div class="c l" style="left:40px;top:343px;width:155px;"><span>Pakaian Wanita</span></div>
<div class="c l" style="left:195px;top:343px;width:191px;"><span>Atasan Linen Elastis</span></div>
<div class="c l" style="left:386px;top:343px;width:93px;"><span>M</span></div>
<div class="c l" style="left:479px;top:343px;width:93px;"><span></span></div>
<div class="c l" style="left:572px;top:343px;width:93px;"><span>1.303.2.1</span></div>
<div class="c l" style="left:665px;top:343px;width:93px;"><span>pcs</span></div>
<div class="c r" style="left:758px;top:343px;width:93px;"><span>0</span></div>
<div class="c r" style="left:851px;top:343px;width:138px;"><span>225000</span></div>
<div class="c r" style="left:989px;top:343px;width:132px;"><span>379000</span></div>
<div class="c r" style="left:1121px;top:343px;width:155px;"><span>0</span></div>
<div class="c r" style="left:1276px;top:343px;width:233px;"><span>0</span></div>
<div class="c l" style="left:1509px;top:343px;width:72px;"><span></span></div>
<div class="c l" style="left:40px;top:372px;width:155px;"><span>Pakaian Wanita</span></div>
<div class="c l" style="left:195px;top:372px;width:191px;"><span>Atasan Linen Elastis</span></div>
<div class="c l" style="left:386px;top:372px;width:93px;"><span>S</span></div>
<div class="c l" style="left:479px;top:372px;width:93px;"><span></span></div>
<div class="c l" style="left:572px;top:372px;width:93px;"><span>1.303.1.1</span></div>
<div class="c l" style="left:665px;top:372px;width:93px;"><span>pcs</span></div>
<div class="c r" style="left:758px;top:372px;width:93px;"><span>0</span></div>
<div class="c r" style="left:851px;top:372px;width:138px;"><span>225000</span></div>
<div class="c r" style="left:989px;top:372px;width:132px;"><span>379000</span></div>
<div class="c r" style="left:1121px;top:372px;width:155px;"><span>1</span></div>
<div class="c r" style="left:1276px;top:372px;width:233px;"><span>0</span></div>
<div class="c l" style="left:1509px;top:372px;width:72px;"><span></span></div>
<div class="c l" style="left:40px;top:401px;width:155px;background:#a5cdf1;border-color:#c8ddf2;"><span>Pakaian Wanita</span></div>
<div class="c l" style="left:195px;top:401px;width:191px;background:#a5cdf1;border-color:#c8ddf2;"><span>Atasan Linen Elastis</span></div>
<div class="c l" style="left:386px;top:401px;width:93px;background:#a5cdf1;border-color:#c8ddf2;"><span>XL</span></div>
<div class="c l" style="left:479px;top:401px;width:93px;background:#a5cdf1;border-color:#c8ddf2;"><span></span></div>
<div class="c l" style="left:572px;top:401px;width:93px;background:#a5cdf1;border-color:#c8ddf2;"><span>1.303.4.1</span></div>
<div class="c l" style="left:665px;top:401px;width:93px;background:#a5cdf1;border-color:#c8ddf2;"><span>pcs</span></div>
<div class="c r" style="left:758px;top:401px;width:93px;background:#a5cdf1;border-color:#c8ddf2;"><span>0</span></div>
<div class="c r" style="left:851px;top:401px;width:138px;background:#a5cdf1;border-color:#c8ddf2;"><span>225000</span></div>
<div class="c r" style="left:989px;top:401px;width:132px;background:#a5cdf1;border-color:#c8ddf2;"><span>379000</span></div>
<div class="c r" style="left:1121px;top:401px;width:155px;background:#a5cdf1;border-color:#c8ddf2;"><span>0</span></div>
<div class="c r" style="left:1276px;top:401px;width:233px;"><span>0</span></div>
<div class="c l" style="left:1509px;top:401px;width:72px;"><span></span></div>
<div class="c l" style="left:40px;top:430px;width:155px;background:#a5cdf1;border-color:#c8ddf2;"><span>Shoes</span></div>
<div class="c l" style="left:195px;top:430px;width:191px;background:#a5cdf1;border-color:#c8ddf2;"><span>Mule Tacon Jewel</span></div>
<div class="c r" style="left:386px;top:430px;width:93px;background:#a5cdf1;border-color:#c8ddf2;"><span>35</span></div>
<div class="c l" style="left:479px;top:430px;width:93px;background:#a5cdf1;border-color:#c8ddf2;"><span></span></div>
<div class="c l" style="left:572px;top:430px;width:93px;background:#a5cdf1;border-color:#c8ddf2;"><span>1.305.1.1</span></div>
<div class="c l" style="left:665px;top:430px;width:93px;background:#a5cdf1;border-color:#c8ddf2;"><span>pcs</span></div>
<div class="c r" style="left:758px;top:430px;width:93px;background:#a5cdf1;border-color:#c8ddf2;"><span>0</span></div>
<div class="c r" style="left:851px;top:430px;width:138px;background:#a5cdf1;border-color:#c8ddf2;"><span>789000</span></div>
<div class="c r" style="left:989px;top:430px;width:132px;background:#a5cdf1;border-color:#c8ddf2;"><span>899900</span></div>
<div class="c r" style="left:1121px;top:430px;width:155px;background:#a5cdf1;border-color:#c8ddf2;"><span>0</span></div>
<div class="c r" style="left:1276px;top:430px;width:233px;background:#a5cdf1;border-color:#c8ddf2;"><span>0</span></div>
<div class="c l" style="left:1509px;top:430px;width:72px;"><span></span></div>
<div class="c l" style="left:40px;top:459px;width:155px;background:#a5cdf1;border-color:#c8ddf2;"><span>Shoes</span></div>
<div class="c l" style="left:195px;top:459px;width:191px;background:#a5cdf1;border-color:#c8ddf2;"><span>Mule Tacon Jewel</span></div>
<div class="c r" style="left:386px;top:459px;width:93px;background:#a5cdf1;border-color:#c8ddf2;"><span>36</span></div>
<div class="c l" style="left:479px;top:459px;width:93px;background:#a5cdf1;border-color:#c8ddf2;"><span></span></div>
<div class="c l" style="left:572px;top:459px;width:93px;background:#a5cdf1;border-color:#c8ddf2;"><span>1.305.2.1</span></div>
<div class="c l" style="left:665px;top:459px;width:93px;background:#a5cdf1;border-color:#c8ddf2;"><span>pcs</span></div>
<div class="c r" style="left:758px;top:459px;width:93px;background:#a5cdf1;border-color:#c8ddf2;"><span>0</span></div>
<div class="c r" style="left:851px;top:459px;width:138px;background:#a5cdf1;border-color:#c8ddf2;"><span>789000</span></div>
<div class="c r" style="left:989px;top:459px;width:132px;background:#a5cdf1;border-color:#c8ddf2;"><span>899900</span></div>
<div class="c r" style="left:1121px;top:459px;width:155px;background:#a5cdf1;border-color:#c8ddf2;"><span>0</span></div>
<div class="c r" style="left:1276px;top:459px;width:233px;background:#a5cdf1;border-color:#c8ddf2;"><span>0</span></div>
<div class="c l" style="left:1509px;top:459px;width:72px;"><span></span></div>
<div class="c l" style="left:40px;top:488px;width:155px;"><span>Shoes</span></div>
<div class="c l" style="left:195px;top:488px;width:191px;"><span>Mule Tacon Jewel</span></div>
<div class="c r" style="left:386px;top:488px;width:93px;"><span>37</span></div>
<div class="c l" style="left:479px;top:488px;width:93px;"><span></span></div>
<div class="c l" style="left:572px;top:488px;width:93px;"><span>1.305.3.1</span></div>
<div class="c l" style="left:665px;top:488px;width:93px;"><span>pcs</span></div>
<div class="c r" style="left:758px;top:488px;width:93px;"><span>0</span></div>
<div class="c r" style="left:851px;top:488px;width:138px;"><span>789000</span></div>
<div class="c r" style="left:989px;top:488px;width:132px;"><span>899900</span></div>
<div class="c r" style="left:1121px;top:488px;width:155px;"><span>1</span></div>
<div class="c r" style="left:1276px;top:488px;width:233px;"><span>0</span></div>
<div class="c l" style="left:1509px;top:488px;width:72px;"><span></span></div>
<div class="c l" style="left:40px;top:517px;width:155px;"><span>Shoes</span></div>
<div class="c l" style="left:195px;top:517px;width:191px;"><span>Mule Tacon Jewel</span></div>
<div class="c r" style="left:386px;top:517px;width:93px;"><span>38</span></div>
<div class="c l" style="left:479px;top:517px;width:93px;"><span></span></div>
<div class="c l" style="left:572px;top:517px;width:93px;"><span>1.305.4.1</span></div>
<div class="c l" style="left:665px;top:517px;width:93px;"><span>pcs</span></div>
<div class="c r" style="left:758px;top:517px;width:93px;"><span>0</span></div>
<div class="c r" style="left:851px;top:517px;width:138px;"><span>789000</span></div>
<div class="c r" style="left:989px;top:517px;width:132px;"><span>899900</span></div>
<div class="c r" style="left:1121px;top:517px;width:155px;"><span>0</span></div>
<div class="c r" style="left:1276px;top:517px;width:233px;"><span>0</span></div>
<div class="c l" style="left:1509px;top:517px;width:72px;"><span></span></div>
<div class="c l" style="left:40px;top:546px;width:155px;"><span>Shoes</span></div>
<div class="c l" style="left:195px;top:546px;width:191px;"><span>Mule Tacon Jewel</span></div>
<div class="c r" style="left:386px;top:546px;width:93px;"><span>39</span></div>
<div class="c l" style="left:479px;top:546px;width:93px;"><span></span></div>
<div class="c l" style="left:572px;top:546px;width:93px;"><span>1.305.5.1</span></div>
<div class="c l" style="left:665px;top:546px;width:93px;"><span>pcs</span></div>
<div class="c r" style="left:758px;top:546px;width:93px;"><span>0</span></div>
<div class="c r" style="left:851px;top:546px;width:138px;"><span>789000</span></div>
<div class="c r" style="left:989px;top:546px;width:132px;"><span>899900</span></div>
<div class="c r" style="left:1121px;top:546px;width:155px;"><span>0</span></div>
<div class="c r" style="left:1276px;top:546px;width:233px;"><span>0</span></div>
<div class="c l" style="left:1509px;top:546px;width:72px;"><span></span></div>
<div class="c l" style="left:40px;top:575px;width:155px;"><span>Shoes</span></div>
<div class="c l" style="left:195px;top:575px;width:191px;"><span>Mule Tacon Jewel</span></div>
<div class="c r" style="left:386px;top:575px;width:93px;"><span>40</span></div>
<div class="c l" style="left:479px;top:575px;width:93px;"><span></span></div>
<div class="c l" style="left:572px;top:575px;width:93px;"><span>1.305.6.1</span></div>
<div class="c l" style="left:665px;top:575px;width:93px;"><span>pcs</span></div>
<div class="c r" style="left:758px;top:575px;width:93px;"><span>0</span></div>
<div class="c r" style="left:851px;top:575px;width:138px;"><span>789000</span></div>
<div class="c r" style="left:989px;top:575px;width:132px;"><span>899900</span></div>
<div class="c r" style="left:1121px;top:575px;width:155px;"><span>0</span></div>
<div class="c r" style="left:1276px;top:575px;width:233px;"><span>0</span></div>
<div class="c l" style="left:1509px;top:575px;width:72px;"><span></span></div>
<div class="c l" style="left:40px;top:604px;width:155px;"><span>Shoes</span></div>
<div class="c l" style="left:195px;top:604px;width:191px;"><span>Mule Tacon Jewel</span></div>
<div class="c r" style="left:386px;top:604px;width:93px;"><span>41</span></div>
<div class="c l" style="left:479px;top:604px;width:93px;"><span></span></div>
<div class="c l" style="left:572px;top:604px;width:93px;"><span>1.305.7.1</span></div>
<div class="c l" style="left:665px;top:604px;width:93px;"><span>pcs</span></div>
<div class="c r" style="left:758px;top:604px;width:93px;"><span>0</span></div>
<div class="c r" style="left:851px;top:604px;width:138px;"><span>789000</span></div>
<div class="c r" style="left:989px;top:604px;width:132px;"><span>899900</span></div>
<div class="c r" style="left:1121px;top:604px;width:155px;"><span>0</span></div>
<div class="c r" style="left:1276px;top:604px;width:233px;"><span>0</span></div>
<div class="c l" style="left:1509px;top:604px;width:72px;"><span></span></div>
<div class="c l" style="left:40px;top:633px;width:155px;"><span>Shoes</span></div>
<div class="c l" style="left:195px;top:633px;width:191px;"><span>Mule Tacon Jewel</span></div>
<div class="c r" style="left:386px;top:633px;width:93px;"><span>42</span></div>
<div class="c l" style="left:479px;top:633px;width:93px;"><span></span></div>
<div class="c l" style="left:572px;top:633px;width:93px;"><span>1.305.8.1</span></div>
<div class="c l" style="left:665px;top:633px;width:93px;"><span>pcs</span></div>
<div class="c r" style="left:758px;top:633px;width:93px;"><span>0</span></div>
<div class="c r" style="left:851px;top:633px;width:138px;"><span>789000</span></div>
<div class="c r" style="left:989px;top:633px;width:132px;"><span>899900</span></div>
<div class="c r" style="left:1121px;top:633px;width:155px;"><span>0</span></div>
<div class="c r" style="left:1276px;top:633px;width:233px;"><span>0</span></div>
<div class="c l" style="left:1509px;top:633px;width:72px;"><span></span></div>
<div class="c l" style="left:40px;top:662px;width:155px;"><span>Shoes</span></div>
<div class="c l" style="left:195px;top:662px;width:191px;"><span>Platform Sneakers</span></div>
<div class="c r" style="left:386px;top:662px;width:93px;"><span>35</span></div>
<div class="c l" style="left:479px;top:662px;width:93px;"><span></span></div>
<div class="c l" style="left:572px;top:662px;width:93px;"><span>1.306.1.1</span></div>
<div class="c l" style="left:665px;top:662px;width:93px;"><span>pcs</span></div>
<div class="c r" style="left:758px;top:662px;width:93px;"><span>0</span></div>
<div class="c r" style="left:851px;top:662px;width:138px;"><span>350000</span></div>
<div class="c r" style="left:989px;top:662px;width:132px;"><span>549000</span></div>
<div class="c r" style="left:1121px;top:662px;width:155px;"><span>0</span></div>
<div class="c r" style="left:1276px;top:662px;width:233px;"><span>0</span></div>
<div class="c l" style="left:1509px;top:662px;width:72px;"><span></span></div>
<div class="c l" style="left:40px;top:691px;width:155px;"><span>Shoes</span></div>
<div class="c l" style="left:195px;top:691px;width:191px;"><span>Platform Sneakers</span></div>
<div class="c r" style="left:386px;top:691px;width:93px;"><span>36</span></div>
<div class="c l" style="left:479px;top:691px;width:93px;"><span></span></div>
<div class="c l" style="left:572px;top:691px;width:93px;"><span>1.306.2.1</span></div>
<div class="c l" style="left:665px;top:691px;width:93px;"><span>pcs</span></div>
<div class="c r" style="left:758px;top:691px;width:93px;"><span>0</span></div>
<div class="c r" style="left:851px;top:691px;width:138px;"><span>350000</span></div>
<div class="c r" style="left:989px;top:691px;width:132px;"><span>549000</span></div>
<div class="c r" style="left:1121px;top:691px;width:155px;"><span>1</span></div>
<div class="c r" style="left:1276px;top:691px;width:233px;"><span>0</span></div>
<div class="c l" style="left:1509px;top:691px;width:72px;"><span></span></div>
<div class="c l" style="left:40px;top:720px;width:155px;"><span>Shoes</span></div>
<div class="c l" style="left:195px;top:720px;width:191px;"><span>Platform Sneakers</span></div>
<div class="c r" style="left:386px;top:720px;width:93px;"><span>37</span></div>
<div class="c l" style="left:479px;top:720px;width:93px;"><span></span></div>
<div class="c l" style="left:572px;top:720px;width:93px;"><span>1.306.3.1</span></div>
<div class="c l" style="left:665px;top:720px;width:93px;"><span>pcs</span></div>
<div class="c r" style="left:758px;top:720px;width:93px;"><span>0</span></div>
<div class="c r" style="left:851px;top:720px;width:138px;"><span>350000</span></div>
<div class="c r" style="left:989px;top:720px;width:132px;"><span>549000</span></div>
<div class="c r" style="left:1121px;top:720px;width:155px;"><span>0</span></div>
<div class="c r" style="left:1276px;top:720px;width:233px;"><span>0</span></div>
<div class="c l" style="left:1509px;top:720px;width:72px;"><span></span></div>
<div class="c l" style="left:40px;top:749px;width:155px;"><span>Shoes</span></div>
<div class="c l" style="left:195px;top:749px;width:191px;"><span>Platform Sneakers</span></div>
<div class="c r" style="left:386px;top:749px;width:93px;"><span>38</span></div>
<div class="c l" style="left:479px;top:749px;width:93px;"><span></span></div>
<div class="c l" style="left:572px;top:749px;width:93px;"><span>1.306.4.1</span></div>
<div class="c l" style="left:665px;top:749px;width:93px;"><span>pcs</span></div>
<div class="c r" style="left:758px;top:749px;width:93px;"><span>0</span></div>
<div class="c r" style="left:851px;top:749px;width:138px;"><span>350000</span></div>
<div class="c r" style="left:989px;top:749px;width:132px;"><span>549000</span></div>
<div class="c r" style="left:1121px;top:749px;width:155px;"><span>2</span></div>
<div class="c r" style="left:1276px;top:749px;width:233px;"><span>0</span></div>
<div class="c l" style="left:1509px;top:749px;width:72px;"><span></span></div>
<div class="c l" style="left:40px;top:778px;width:155px;"><span>Shoes</span></div>
<div class="c l" style="left:195px;top:778px;width:191px;"><span>Platform Sneakers</span></div>
<div class="c r" style="left:386px;top:778px;width:93px;"><span>39</span></div>
<div class="c l" style="left:479px;top:778px;width:93px;"><span></span></div>
<div class="c l" style="left:572px;top:778px;width:93px;"><span>1.306.5.1</span></div>
<div class="c l" style="left:665px;top:778px;width:93px;"><span>pcs</span></div>
<div class="c r" style="left:758px;top:778px;width:93px;"><span>0</span></div>
<div class="c r" style="left:851px;top:778px;width:138px;"><span>350000</span></div>
<div class="c r" style="left:989px;top:778px;width:132px;"><span>549000</span></div>
<div class="c r" style="left:1121px;top:778px;width:155px;"><span>0</span></div>
<div class="c r" style="left:1276px;top:778px;width:233px;"><span>0</span></div>
<div class="c l" style="left:1509px;top:778px;width:72px;"><span></span></div>
<div class="rh" style="top:169px">8</div>
<div class="rh" style="top:198px">9</div>
<div class="rh" style="top:227px">10</div>
<div class="rh" style="top:256px">11</div>
<div class="rh" style="top:285px">12</div>
<div class="rh" style="top:314px">13</div>
<div class="rh" style="top:343px">14</div>
<div class="rh" style="top:372px">15</div>
<div class="rh sel" style="top:401px">16</div>
<div class="rh sel" style="top:430px">17</div>
<div class="rh sel" style="top:459px">18</div>
<div class="rh" style="top:488px">19</div>
<div class="rh" style="top:517px">20</div>
<div class="rh" style="top:546px">21</div>
<div class="rh" style="top:575px">22</div>
<div class="rh" style="top:604px">23</div>
<div class="rh" style="top:633px">24</div>
<div class="rh" style="top:662px">25</div>
<div class="rh" style="top:691px">26</div>
<div class="rh" style="top:720px">27</div>
<div class="rh" style="top:749px">28</div>
<div class="rh" style="top:778px">29</div>
<div class="ch sel" style="left:40px;width:155px">B</div>
<div class="ch sel" style="left:195px;width:191px">C</div>
<div class="ch sel" style="left:386px;width:93px">D</div>
<div class="ch sel" style="left:479px;width:93px">E</div>
<div class="ch sel" style="left:572px;width:93px">F</div>
<div class="ch sel" style="left:665px;width:93px">G</div>
<div class="ch sel" style="left:758px;width:93px">H</div>
<div class="ch sel" style="left:851px;width:138px">I</div>
<div class="ch sel" style="left:989px;width:132px">J</div>
<div class="ch sel" style="left:1121px;width:155px">K</div>
<div class="ch sel" style="left:1276px;width:233px">L</div>
<div class="ch" style="left:1509px;width:91px">M</div>
<div id="corner"></div>
<div class="a" style="left:0;top:141px;width:1px;height:658px;background:#9a9a9a"></div>
<div id="selbox"></div>
<div id="fillh"><div></div></div>
<div id="vscroll"></div>
<div id="tabrow"></div>
<div id="status"></div>
<svg class="a" style="left:1496px;top:10px" width="11" height="7" viewBox="0 0 11 7"><path d="M1 6L5.5 1.5L10 6" stroke="#e8e8e8" stroke-width="2" fill="none"/></svg>
<svg class="a" style="left:1514px;top:4px" width="18" height="18" viewBox="0 0 18 18"><defs><radialGradient id="hg" cx=".4" cy=".3" r=".8"><stop offset="0" stop-color="#8ab8f0"/><stop offset="1" stop-color="#2a64c0"/></radialGradient></defs><circle cx="9" cy="9" r="8.3" fill="url(#hg)" stroke="#2a5aa8" stroke-width=".8"/><text x="9" y="14" text-anchor="middle" font-family="Liberation Sans" font-weight="bold" font-size="13" fill="#fff">?</text></svg>
<div class="a" style="left:1540px;top:13px;width:11px;height:4px;background:#eee;border:1px solid #888;border-radius:1px"></div>
<svg class="a" style="left:1560px;top:7px" width="14" height="13" viewBox="0 0 14 13"><rect x="4.5" y="1.5" width="8" height="6" fill="none" stroke="#eee" stroke-width="1.6"/><rect x="1.5" y="5.5" width="8" height="6" fill="#555" stroke="#eee" stroke-width="1.6"/></svg>
<svg class="a" style="left:1583px;top:7px" width="13" height="11" viewBox="0 0 13 11"><path d="M2 1.5L11 9.5M11 1.5L2 9.5" stroke="#f0f0f0" stroke-width="2.6"/></svg>
<svg class="a" style="left:147px;top:125px" width="7" height="3"><path d="M0 0H7L3.5 3Z" fill="#111"/></svg>
<div class="a" style="left:166px;top:121px;width:10px;height:10px;border-radius:50%;background:radial-gradient(circle at 50% 75%,#7c7c7c,#565656 70%)"></div>
<div class="rt" style="left:226px;top:117px;font-family:'Liberation Serif';font-style:italic;font-size:14px;color:#eaeaea">f<span style="font-size:11px">x</span></div>
<div class="a" style="left:1585px;top:115px;width:14px;height:22px;background:#6a6a6a;border:1px solid #3c3c3c"></div>
<svg class="a" style="left:1587px;top:122px" width="10" height="7" viewBox="0 0 10 7"><path d="M1.5 1.5L5 5L8.5 1.5" stroke="#fff" stroke-width="2" fill="none"/></svg>
<svg class="a" style="left:16px;top:145px" width="20" height="20" viewBox="0 0 20 20"><path d="M1 19H19V1Z" fill="#4a4a4a"/></svg>
<div class="a" style="left:1596px;top:141px;width:4px;height:674px;background:#777;border-left:1px solid #474747"></div>
<div class="a" style="left:1581px;top:141px;width:15px;height:8px;border:1px solid #474747;background:linear-gradient(#8a8a8a,#6a6a6a)"><div style="margin:1px 2px;height:3px;border:1px solid #5a5a5a;background:#9a9a9a"></div></div>
<svg class="a" style="left:1583px;top:155px" width="10" height="6" viewBox="0 0 10 6"><path d="M0 5.5H9L4.5 0.5Z" fill="#222"/></svg>
<div class="a" style="left:1581px;top:269px;width:14px;height:307px;border:1px solid #3c3c3c;border-radius:1px;background:linear-gradient(90deg,#8a8a8a,#6e6e6e 50%,#5c5c5c)"></div>
<svg class="a" style="left:1584px;top:420px" width="8" height="7" viewBox="0 0 8 7"><path d="M0 0.5H8M0 3H8M0 5.5H8" stroke="#a8a8a8"/></svg>
<svg class="a" style="left:1583px;top:786px" width="10" height="6" viewBox="0 0 10 6"><path d="M0 0.5H9L4.5 5.5Z" fill="#222"/></svg>
<div class="a" style="left:0;top:799px;width:1580px;height:16px;background:linear-gradient(#6a6a6a,#5e5e5e);border-top:1px solid #3a3a3a"></div>
<div class="a" style="left:0;top:799px;width:62px;height:16px;background:linear-gradient(#7a7a7a,#666);border-top:1px solid #3a3a3a;border-right:1px solid #444"></div>
<svg class="a" style="left:4px;top:803px" width="56" height="9" viewBox="0 0 56 9"><g fill="#a8a8a8"><rect x="1" y="0.5" width="1.3" height="8"/><path d="M8 0.5V8.5L3 4.5Z"/><path d="M23 0.5V8.5L18 4.5Z"/><path d="M31 0.5V8.5L36 4.5Z"/><path d="M46 0.5V8.5L51 4.5Z"/><rect x="52" y="0.5" width="1.3" height="8"/></g></svg>
<svg class="a" style="left:60px;top:799px" width="145" height="17" viewBox="0 0 145 17"><path d="M2.5 0V14L4.5 16H195L201 0Z" fill="url(#tg)" stroke="#4a4a4a" stroke-width="1"/><defs><linearGradient id="tg" x1="0" y1="0" x2="0" y2="1"><stop offset="0" stop-color="#fff"/><stop offset="1" stop-color="#eaeaea"/></linearGradient></defs></svg>
<div class="rt" style="left:73px;top:800px;font-size:11.4px;line-height:13px;color:#3a3f50;font-weight:bold;letter-spacing:.6px;font-size:11.2px">Penerimaan_Massal</div>
<svg class="a" style="left:194px;top:799px" width="48" height="17" viewBox="0 0 48 17"><path d="M1 16L8 1H46L38 16Z" fill="#5e5e5e" stroke="#8a8a8a" stroke-width="1"/><rect x="16" y="5" width="11" height="8" rx="1" fill="#c8d8f0" stroke="#7a8ab0" stroke-width=".8"/><circle cx="16" cy="5" r="2.5" fill="#ffd84a"/></svg>
<div class="a" style="left:1007px;top:800px;width:573px;height:14px;background:#666"></div>
<div class="a" style="left:1022px;top:800px;width:533px;height:14px;border:1px solid #333;border-radius:2px;background:linear-gradient(#7a7a7a,#666 50%,#555)"></div>
<svg class="a" style="left:1283px;top:803px" width="8" height="8" viewBox="0 0 8 8"><path d="M1 0V8M3.5 0V8M6 0V8" stroke="#aaa"/></svg>
<svg class="a" style="left:1560px;top:803px" width="6" height="9" viewBox="0 0 6 9"><path d="M0.5 0.5V8.5L5.5 4.5Z" fill="#222"/></svg>
<div class="a" style="left:1573px;top:801px;width:7px;height:13px;border:1px solid #3a3a3a;background:#8a8a8a"></div>
<div class="rt" style="left:8px;top:819.6px;color:#dcdcdc;font-size:11.4px;line-height:13.0px;">Ready</div>
<div class="a" style="left:48px;top:816px;width:2px;height:19px;border-left:1px solid #222;border-right:1px solid #555"></div>
<div class="rt" style="left:1086px;top:819.7px;color:#e6e6e6;font-size:11px;line-height:12.5px;">Average: 234227.7059</div>
<div class="rt" style="left:1212px;top:819.7px;color:#e6e6e6;font-size:11px;line-height:12.5px;">Count: 30</div>
<div class="rt" style="left:1278px;top:819.7px;color:#e6e6e6;font-size:11px;line-height:12.5px;">Sum: 3981871</div>
<div class="a" style="left:1357px;top:816px;width:2px;height:19px;border-left:1px solid #1a1a1a;border-right:1px solid #555"></div>
<div class="a" style="left:1363px;top:818px;width:19px;height:17px;border:1px solid #e8b840;border-radius:2px;background:linear-gradient(#fff2b0,#f7d46a)"></div>
<svg class="a" style="left:1366px;top:821px" width="14" height="11" viewBox="0 0 14 11"><rect x="0.5" y="0.5" width="13" height="10" fill="#fff" stroke="#333"/><path d="M0 3.5H14M0 7H14M4.5 0V11M9 0V11" stroke="#333"/></svg>
<svg class="a" style="left:1383px;top:819px" width="16" height="15" viewBox="0 0 16 15"><rect x="0.5" y="0.5" width="15" height="14" fill="#9a9a9a" stroke="#777"/><rect x="3.5" y="2.5" width="9" height="10" fill="#e8e8e8" stroke="#555"/><path d="M5 5H11M5 7.5H11M5 10H11" stroke="#777"/></svg>
<svg class="a" style="left:1402px;top:819px" width="16" height="15" viewBox="0 0 16 15"><rect x="0.5" y="0.5" width="15" height="14" fill="#9a9a9a" stroke="#777"/><rect x="2" y="2" width="4" height="8" fill="#f0f0f0"/><rect x="8" y="2" width="4" height="8" fill="#f0f0f0"/><path d="M1 11H15" stroke="#444"/></svg>
<div class="rt" style="left:1429px;top:819.7px;color:#e6e6e6;font-size:11px;line-height:12.5px;">145%</div>
<svg class="a" style="left:1464px;top:819px" width="16" height="16" viewBox="0 0 16 16"><circle cx="8" cy="8" r="7" fill="#bdbdbd" stroke="#555"/><path d="M4 8H12" stroke="#333" stroke-width="2.2"/></svg>
<div class="a" style="left:1480px;top:826px;width:101px;height:1px;background:#888"></div>
<div class="a" style="left:1530px;top:822px;width:1px;height:9px;background:#888"></div>
<svg class="a" style="left:1533px;top:818px" width="9" height="14" viewBox="0 0 9 14"><path d="M0.5 0.5H8.5V9L4.5 13L0.5 9Z" fill="#d8d8d8" stroke="#555"/></svg>
<svg class="a" style="left:1580px;top:819px" width="16" height="16" viewBox="0 0 16 16"><circle cx="8" cy="8" r="7" fill="#bdbdbd" stroke="#555"/><path d="M4 8H12M8 4V12" stroke="#333" stroke-width="2.2"/></svg>
<div id="mini"></div>
<div class="a" style="left:779px;top:416px;width:60px;height:20px;border:1px solid #c8c8c8;background:#fff"></div>
<div class="a" style="left:838px;top:416px;width:40px;height:20px;border:1px solid #c8c8c8;background:#fff"></div>
<div class="rt" style="left:782px;top:418.7px;color:#222;font-size:11px;line-height:12.5px;">Calibri</div>
<svg class="a" style="left:829px;top:425px" width="5" height="3"><path d="M0 0H5L2.5 3Z" fill="#666"/></svg>
<div class="rt" style="left:841.5px;top:418.7px;color:#222;font-size:11px;line-height:12.5px;">11</div>
<svg class="a" style="left:869px;top:425px" width="5" height="3"><path d="M0 0H5L2.5 3Z" fill="#666"/></svg>
<div class="rt" style="left:883px;top:417px;font-family:'Liberation Serif';font-size:15px;font-weight:bold;color:#333">A</div>
<svg class="a" style="left:893px;top:418px" width="6" height="4" viewBox="0 0 6 4"><path d="M0 3.5H5L2.5 0Z" fill="#3a64b0"/></svg>
<div class="rt" style="left:905px;top:421px;font-family:'Liberation Serif';font-size:11px;font-weight:bold;color:#333">A</div>
<svg class="a" style="left:912px;top:418px" width="6" height="4" viewBox="0 0 6 4"><path d="M0 0H5L2.5 3.5Z" fill="#3a64b0"/></svg>
<div class="rt" style="left:929px;top:418px;font-size:13.5px;font-weight:bold;color:#222">$</div>
<svg class="a" style="left:948px;top:425px" width="4" height="3"><path d="M0 0H4L2.0 3Z" fill="#666"/></svg>
<div class="rt" style="left:961px;top:419px;font-size:12.5px;color:#222">%</div>
<div class="rt" style="left:988px;top:417px;font-size:13px;font-weight:bold;color:#222">,</div>
<svg class="a" style="left:1004px;top:418px" width="17" height="15" viewBox="0 0 17 15"><rect x="0.5" y="0.5" width="16" height="14" fill="#dfe8f6" stroke="#6a86b8"/><path d="M0 4.5H17M0 10.5H17" stroke="#6a86b8"/><rect x="1" y="5" width="15" height="5" fill="#fff"/><text x="5.5" y="10" font-family="Liberation Serif" font-size="8" font-weight="bold" fill="#111">a</text><path d="M1 7.5H4.5M12.5 7.5H16" stroke="#111"/></svg>
<div class="rt" style="left:783px;top:442px;font-family:'Liberation Serif';font-size:14px;font-weight:bold;color:#222">B</div>
<div class="rt" style="left:805px;top:442px;font-family:'Liberation Serif';font-size:14px;font-style:italic;color:#222">I</div>
<svg class="a" style="left:825px;top:445px" width="15" height="12" viewBox="0 0 15 12"><path d="M0 0.5H14M2 3.5H12M0 6.5H14M2 9.5H12M0 12.5H14" stroke="#111" stroke-width="1"/></svg>
<svg class="a" style="left:846px;top:442px" width="19" height="18" viewBox="0 0 19 18"><path d="M3 8.3L8.8 2.7L14.3 8L8.8 12.8Z" fill="#f4f6fb" stroke="#2a3040" stroke-width="1" stroke-dasharray="1.2 .6"/><path d="M7 5.5Q8.8 -1.5 10.6 5.5" stroke="#555" stroke-width="1.1" fill="none"/><path d="M8.8 3V7" stroke="#555" stroke-width="1.2"/><ellipse cx="15.6" cy="9.8" rx="1.8" ry="3.2" fill="#3a64b8"/><rect x="1" y="13" width="16" height="4" fill="#ffff00"/></svg>
<svg class="a" style="left:868px;top:451px" width="4" height="3"><path d="M0 0H4L2.0 3Z" fill="#666"/></svg>
<div class="rt" style="left:880px;top:439px;font-family:'Liberation Serif';font-size:16px;font-weight:bold;color:#2a4f9a">A</div>
<div class="a" style="left:880px;top:455px;width:16px;height:4px;background:#e8141c"></div>
<svg class="a" style="left:902px;top:451px" width="4" height="3"><path d="M0 0H4L2.0 3Z" fill="#666"/></svg>
<svg class="a" style="left:916px;top:444px" width="15" height="15" viewBox="0 0 15 15"><path d="M1 1.5H14M1 7.5H14M1.5 1V14M7.5 1V14M13.5 1V14" stroke="#777" stroke-dasharray="1 1" fill="none"/><path d="M1 13.5H14" stroke="#111" stroke-width="1.2"/></svg>
<svg class="a" style="left:937px;top:451px" width="4" height="3"><path d="M0 0H4L2.0 3Z" fill="#666"/></svg>
<svg class="a" style="left:948px;top:443px" width="18" height="16" viewBox="0 0 18 16"><text x="5" y="7" font-family="Liberation Sans" font-size="8" font-weight="bold" fill="#222">.0</text><text x="2" y="15" font-family="Liberation Sans" font-size="8" font-weight="bold" fill="#222">.00</text><path d="M1 4H6M1 4L3 2M1 4L3 6" stroke="#3a6ad0" stroke-width="1.3" fill="none"/></svg>
<svg class="a" style="left:969px;top:443px" width="18" height="16" viewBox="0 0 18 16"><text x="5" y="7" font-family="Liberation Sans" font-size="8" font-weight="bold" fill="#222">.00</text><text x="8" y="15" font-family="Liberation Sans" font-size="8" font-weight="bold" fill="#222">.0</text><path d="M1 11H7M7 11L5 9M7 11L5 13" stroke="#3a6ad0" stroke-width="1.3" fill="none"/></svg>
<svg class="a" style="left:992px;top:443px" width="17" height="16" viewBox="0 0 17 16"><path d="M11.5 5.5L15 2" stroke="#5a4aa8" stroke-width="3.2" stroke-linecap="round"/><path d="M8 4.5L12.5 9L10.5 11L6 6.5Z" fill="#d8d8e0" stroke="#6a6a7a" stroke-width=".8"/><path d="M6 6.5L10.5 11L6 15.5L0.5 10Z" fill="#e6cf5a" stroke="#8a7424" stroke-width=".8"/><path d="M3 10L7 14M5 8.5L9 12.5" stroke="#f6e9a0" stroke-width=".8"/></svg>
<div id="menu"></div>
<div class="a" style="left:802px;top:481px;width:1px;height:351px;background:#e2e3e5"></div>
<div class="a" style="left:804px;top:525px;width:172px;height:18px;background:#eef0f4"></div>
<div class="a" style="left:778px;top:621px;width:197px;height:22px;border:1px solid #e6c35c;border-radius:3px;background:linear-gradient(#fef4cc,#fde597 45%,#fcdc70 60%,#fde694)"></div>
<div class="rt" style="left:811px;top:486.1px;color:#2a2a2a;font-size:11.3px;line-height:12.9px;">Cu<u>t</u></div>
<div class="rt" style="left:811px;top:508.1px;color:#2a2a2a;font-size:11.3px;line-height:12.9px;"><u>C</u>opy</div>
<div class="rt" style="left:811px;top:529.1px;color:#2a2a2a;font-size:11.3px;line-height:12.9px;font-weight:bold">Paste Options:</div>
<div class="rt" style="left:811px;top:578.1px;color:#a0a0a0;font-size:11.3px;line-height:12.9px;">Paste <u>S</u>pecial...</div>
<div class="rt" style="left:811px;top:604.1px;color:#2a2a2a;font-size:11.3px;line-height:12.9px;"><u>I</u>nsert...</div>
<div class="rt" style="left:811px;top:626.1px;color:#2a2a2a;font-size:11.3px;line-height:12.9px;"><u>D</u>elete...</div>
<div class="rt" style="left:811px;top:648.1px;color:#2a2a2a;font-size:11.3px;line-height:12.9px;">Clear Co<u>n</u>tents</div>
<div class="rt" style="left:811px;top:674.1px;color:#2a2a2a;font-size:11.3px;line-height:12.9px;">Filt<u>e</u>r</div>
<div class="rt" style="left:811px;top:696.1px;color:#2a2a2a;font-size:11.3px;line-height:12.9px;">S<u>o</u>rt</div>
<div class="rt" style="left:811px;top:722.1px;color:#2a2a2a;font-size:11.3px;line-height:12.9px;">Insert Co<u>m</u>ment</div>
<div class="rt" style="left:811px;top:748.1px;color:#2a2a2a;font-size:11.3px;line-height:12.9px;"><u>F</u>ormat Cells...</div>
<div class="rt" style="left:811px;top:770.1px;color:#2a2a2a;font-size:11.3px;line-height:12.9px;">Pic<u>k</u> From Drop-down List...</div>
<div class="rt" style="left:811px;top:792.1px;color:#2a2a2a;font-size:11.3px;line-height:12.9px;">Define N<u>a</u>me...</div>
<div class="rt" style="left:811px;top:814.1px;color:#2a2a2a;font-size:11.3px;line-height:12.9px;">Hyperl<u>i</u>nk...</div>
<div class="a" style="left:810px;top:596px;width:165px;height:1px;background:repeating-linear-gradient(90deg,#c5c5c5 0 2px,transparent 2px 4px)"></div>
<div class="a" style="left:810px;top:667px;width:165px;height:1px;background:repeating-linear-gradient(90deg,#c5c5c5 0 2px,transparent 2px 4px)"></div>
<div class="a" style="left:810px;top:714px;width:165px;height:1px;background:repeating-linear-gradient(90deg,#c5c5c5 0 2px,transparent 2px 4px)"></div>
<div class="a" style="left:810px;top:740px;width:165px;height:1px;background:repeating-linear-gradient(90deg,#c5c5c5 0 2px,transparent 2px 4px)"></div>
<svg class="a" style="left:961px;top:676px" width="5" height="8" viewBox="0 0 5 8"><path d="M0.5 0.5V7.5L4.5 4Z" fill="#222"/></svg>
<svg class="a" style="left:961px;top:698px" width="5" height="8" viewBox="0 0 5 8"><path d="M0.5 0.5V7.5L4.5 4Z" fill="#222"/></svg>
<svg class="a" style="left:784px;top:484px" width="12" height="16" viewBox="0 0 12 16"><path d="M3 1L6.5 9M9 1L5.5 9" stroke="#707080" stroke-width="1.5" fill="none"/><circle cx="3.3" cy="12" r="2.4" fill="none" stroke="#3a5db0" stroke-width="2"/><circle cx="8.7" cy="12" r="2.4" fill="none" stroke="#3a5db0" stroke-width="2"/></svg>
<svg class="a" style="left:782px;top:506px" width="16" height="16" viewBox="0 0 16 16"><path d="M0.5 0.5H6.5L8.5 2.5V10.5H0.5Z" fill="#fff" stroke="#4a78c0"/><path d="M2 3.5H7M2 5.5H7M2 7.5H6" stroke="#5a8ad0"/><path d="M6.5 4.5H12.5L15.5 7.5V15.5H6.5Z" fill="#fff" stroke="#2d5aa6"/><path d="M8 8.5H14M8 10.5H14M8 12.5H14" stroke="#3d6ac0"/></svg>
<svg class="a" style="left:782px;top:528px" width="17" height="16" viewBox="0 0 17 16"><rect x="0.5" y="2.5" width="12" height="12" rx="1" fill="#a8a8a8" stroke="#7a7a7a"/><rect x="4" y="0.5" width="5" height="3" fill="#ddd" stroke="#777"/><path d="M6.5 7.5H13L16.5 11V15.5H6.5Z" fill="#e0e0e0" stroke="#7a7a7a"/></svg>
<div class="a" style="left:807px;top:547px;width:23px;height:23px;border:1px solid #9c9c9c;background:#c4c4c4"></div>
<svg class="a" style="left:810px;top:549px" width="18" height="19" viewBox="0 0 18 19"><rect x="1.5" y="2.5" width="15" height="15" rx="1" fill="#b4b4b4" stroke="#8a8a8a"/><rect x="6.5" y="0.5" width="5" height="3" fill="#ddd" stroke="#888"/><path d="M5.5 7.5H11.5L14.5 10.5V17.5H5.5Z" fill="#e4e4e4" stroke="#8a8a8a"/><path d="M7 11H12M7 13H13M7 15H13" stroke="#aaa"/></svg>
<svg class="a" style="left:782px;top:720px" width="17" height="16" viewBox="0 0 17 16"><rect x="2.5" y="4.5" width="14" height="11" fill="#e8d060" stroke="#8a7020"/><rect x="3" y="5" width="13" height="4" fill="#f4e490"/><path d="M1 1L5 5M3 0V3M0 3H3M6 1L4 3" stroke="#f0d020" stroke-width="1.2"/><circle cx="13" cy="12" r="1" fill="#fff"/></svg>
<svg class="a" style="left:782px;top:746px" width="17" height="16" viewBox="0 0 17 16"><rect x="0.5" y="4.5" width="12" height="11" fill="#eef4fc" stroke="#3a5a9a"/><path d="M2 9H5M6 9H11M2 12H5M6 12H11" stroke="#5a7ab0"/><path d="M4 6L9 2H14L15 4L11 7Z" fill="#e8c040" stroke="#a08020" stroke-width=".8"/><path d="M14 1V6L17 3Z" fill="#2a9a4a"/></svg>
<svg class="a" style="left:781px;top:810px" width="19" height="20" viewBox="0 0 19 20"><defs><radialGradient id="gl1" cx=".35" cy=".3" r=".8"><stop offset="0" stop-color="#a8d8ff"/><stop offset="1" stop-color="#2a78c8"/></radialGradient></defs><circle cx="7.5" cy="7.5" r="5.8" fill="url(#gl1)"/><path d="M3.5 4.5Q6 3 7.5 5.5T10 9.5L12.5 8Q12 4 8.5 2.2Q5 2 3.5 4.5Z" fill="#3aa040"/><rect x="2.5" y="13.5" width="8" height="5" rx="2.5" fill="none" stroke="#5a6a90" stroke-width="1.6"/><rect x="9" y="13.5" width="8" height="5" rx="2.5" fill="none" stroke="#5a6a90" stroke-width="1.6"/></svg>
</body></html>
